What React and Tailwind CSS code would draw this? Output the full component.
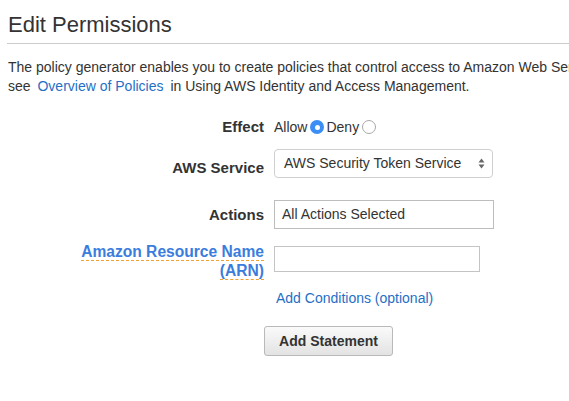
import React from 'react';

const font = { fontFamily: '"Liberation Sans", Arial, sans-serif' };

function Radio({ checked }) {
  return checked ? (
    <span className="inline-flex h-[14px] w-[14px] items-center justify-center rounded-full bg-[#3a8ef6]">
      <span className="h-[5px] w-[5px] rounded-full bg-white" />
    </span>
  ) : (
    <span className="inline-block h-[14px] w-[14px] rounded-full border border-[#a9a9a9] bg-white" />
  );
}

export default function App() {
  return (
    <div className="h-[401px] w-[569px] overflow-hidden bg-white text-[#333]" style={font}>
      <div className="px-2 pt-[12px]">
        <h1 className="text-[22px] leading-[26px] text-[#333]">Edit Permissions</h1>
      </div>
      <div className="ml-[7px] mt-[5px] border-t border-[#cccccc]" />
      <p className="mt-[14px] whitespace-nowrap px-2 text-[14px] leading-[19px]">
        The policy generator enables you to create policies that control access to Amazon Web Services products and resources. For more information about creating policies,
        <br />
        see <a className="mx-[3px] text-[#1f6fc5]">Overview of Policies</a> in Using AWS Identity and Access Management.
      </p>

      <div className="mt-[22px] grid grid-cols-[264px_1fr] gap-x-[10px]">
        <div className="text-right text-[15px] font-bold leading-[18px]">Effect</div>
        <div className="flex items-center text-[14px] leading-[18px]">
          <span>Allow</span>
          <span className="ml-[3px] flex"><Radio checked /></span>
          <span className="ml-[2px]">Deny</span>
          <span className="ml-[3px] flex"><Radio /></span>
        </div>

        <div className="mt-[16px] self-center pt-[6px] text-right text-[15px] font-bold leading-[18px]">AWS Service</div>
        <div className="mt-[13px]">
          <div className="flex h-[29px] w-[219px] items-center justify-between rounded-[4px] border border-[#cfcfcf] bg-white pl-[9px] pr-[7px] text-[14px]">
            <span>AWS Security Token Service</span>
            <svg width="7" height="11" viewBox="0 0 7 11">
              <path d="M3.5 0.5 L6.5 4.5 H0.5 Z" fill="#666" />
              <path d="M3.5 10.5 L6.5 6.5 H0.5 Z" fill="#666" />
            </svg>
          </div>
        </div>

        <div className="mt-[22px] self-center text-right text-[15px] font-bold leading-[18px]">Actions</div>
        <div className="mt-[22px]">
          <div className="flex h-[29px] w-[220px] items-center border border-[#bdbdbd] pl-[7px] text-[14px]">All Actions Selected</div>
        </div>

        <div className="mt-[13px] text-right text-[15.6px] font-bold leading-[19px] text-[#3b7ddd]">
          <span className="border-b border-dashed border-[#f0a030]">Amazon Resource Name</span>
          <br />
          <span className="border-b border-dashed border-[#f0a030]">(ARN)</span>
        </div>
        <div className="mt-[17px]">
          <div className="h-[26px] w-[206px] border border-[#c4c4c4]" />
        </div>

        <div />
        <div className="mt-[9px] pl-[2px] text-[14px] leading-[18px] text-[#1f6fc5]">Add Conditions (optional)</div>

        <div />
        <div className="-ml-[10px] mt-[19px]">
          <button className="h-[30px] w-[129px] rounded-[3px] border border-[#b9b9b9] bg-gradient-to-b from-[#fafafa] to-[#e3e3e3] text-[14px] font-bold text-[#333]">
            Add Statement
          </button>
        </div>
      </div>
    </div>
  );
}
